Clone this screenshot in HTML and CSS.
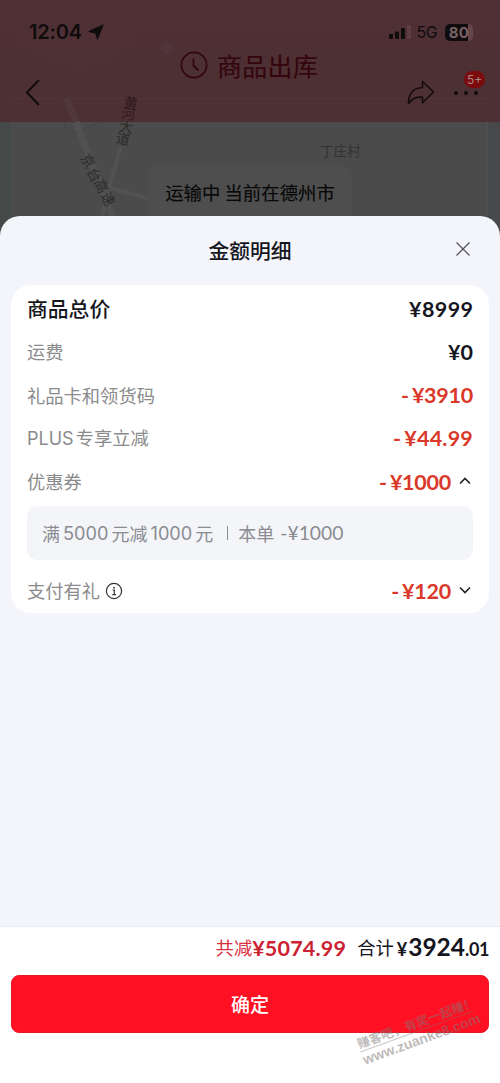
FILE: index.html
```html
<!DOCTYPE html>
<html lang="zh-CN">
<head>
<meta charset="utf-8">
<meta name="viewport" content="width=device-width, initial-scale=1">
<title>金额明细</title>
<link rel="stylesheet" href="styles.css">
</head>
<body>
<div class="screen">
  <header class="header">
    <svg class="clouds" width="500" height="122" viewBox="0 0 500 122">
      <path d="M12 48Q28 24 58 27Q85 8 105 25Q122 21 138 45Q120 48 112 60Q82 76 45 58Q33 46 12 48Z" fill="#563b3d" opacity=".15"/>
      <path d="M157 48Q165 47 167 40Q169 47 178 48Q169 50 167 55Q165 50 157 48Z" fill="#573b49" opacity=".4"/>
      <path d="M10 98.500H490" fill="none" stroke="#583c40" opacity=".35"/>
    </svg>
    <div class="status">
      <span class="time">12:04</span>
      <svg class="locate" width="16" height="16" viewBox="0 0 16 16"><path d="M15.200 .8 9.400 15.400 7.800 9.300 .8 7.500Z" fill="#100b0c" stroke="#100b0c" stroke-linejoin="round"/></svg>
      <svg class="signal" width="23" height="16" viewBox="0 0 23 16">
        <g fill="#100b0c"><rect x="0" y="10" width="4" height="5" rx="1"/><rect x="6" y="7.500" width="4" height="7.500" rx="1"/><rect x="12" y="4" width="4" height="11" rx="1"/></g>
        <rect x="18" y="1" width="4" height="14" rx="1" fill="#5d3f42"/>
      </svg>
      <span class="network">5G</span>
      <span class="battery"><b>80</b></span>
    </div>
    <div class="nav">
      <svg class="back" width="16" height="28" viewBox="0 0 16 28"><path d="M14 2 2 14.500 14 27" fill="none" stroke="#100b0c" stroke-width="2"/></svg>
      <div class="order-state">
        <svg width="28" height="28" viewBox="0 0 28 28" fill="none" stroke="#34060e" stroke-width="1.8"><circle cx="14" cy="14" r="12.600"/><path d="M13.500 8V14.500L18 19" stroke-linecap="round" stroke-linejoin="round"/></svg>
        <span>商品出库</span>
      </div>
      <svg class="share" width="28" height="26" viewBox="0 0 28 26"><path d="M15.500 1.500 26.500 12 15.500 22.800V17.300Q6.500 16 1.500 23.500Q1.500 8.500 15.500 7.500Z" fill="none" stroke="#150b0c" stroke-width="1.6" stroke-linejoin="round"/></svg>
      <div class="more"><i></i><i></i><i></i><span class="badge">5+</span></div>
    </div>
  </header>
  <section class="map">
    <svg class="map-canvas" width="500" height="152" viewBox="0 88 500 152">
      <path d="M0 122H11V240H0Z" fill="#454948"/>
      <path d="M487 122H500V240H487Z" fill="#46484b"/>
      <path d="M11.500 122V240M487.500 122V240" stroke="#4f5050"/>
      <path d="M66 98Q71 109 76 122" fill="none" stroke="#50373a" stroke-width="7"/>
      <path d="M76 122Q83 142 94 169T121 240" fill="none" stroke="#505150" stroke-width="7"/>
      <path d="M121 146 109 188 101 222M110 188 150 199" fill="none" stroke="#515252" stroke-width="4"/>
      <path d="M64 122Q64 136 77 132M84 129 101 122" fill="none" stroke="#454545"/>
      <g class="road-name" fill="#2b2b2b" text-anchor="middle">
        <text x="131" y="108" transform="rotate(8 131 103)" fill="#32191d">黄</text>
        <text x="128.500" y="119" transform="rotate(8 128 114)" fill="#32191d">河</text>
        <text x="126" y="132" transform="rotate(10 126 128)">大</text>
        <text x="123" y="144" transform="rotate(12 123 140)">道</text>
        <text x="88" y="166" transform="rotate(58 88 161)">京</text>
        <text x="94" y="180" transform="rotate(62 94 175)">台</text>
        <text x="101" y="191" transform="rotate(64 101 186)">高</text>
        <text x="108" y="204" transform="rotate(64 108 199)">速</text>
      </g>
      <text class="village" x="320" y="156">丁庄村</text>
    </svg>
    <div class="location">运输中 当前在德州市</div>
  </section>
  <main class="sheet">
    <div class="sheet-title">
      <h1>金额明细</h1>
      <svg class="close" width="16" height="16" viewBox="0 0 16 16"><path d="m1.500 1.500 13 13m0-13-13 13" stroke="#55565d" stroke-width="1.3"/></svg>
    </div>
    <div class="card">
      <div class="row total"><span class="label">商品总价</span><span class="amount">¥8999</span></div>
      <div class="row"><span class="label">运费</span><span class="amount">¥0</span></div>
      <div class="row off"><span class="label">礼品卡和领货码</span><span class="amount"><span class="minus">-</span>¥3910</span></div>
      <div class="row off"><span class="label"><span class="latin">PLUS</span>专享立减</span><span class="amount wide"><span class="minus">-</span>¥44.99</span></div>
      <div class="row off"><span class="label">优惠券</span><span class="amount"><span class="minus">-</span>¥1000</span><svg class="chevron" width="12" height="8" viewBox="0 0 12 8"><path d="m1 6.500 5-5 5 5" fill="none" stroke="#222" stroke-width="1.6"/></svg></div>
      <div class="coupon"><span>满</span><span class="digits">5000</span><span>元减</span><span class="digits">1000</span><span>元</span><i class="bar"></i><span>本单</span><span class="coupon-off">-¥1000</span></div>
      <div class="row off"><span class="label">支付有礼</span><svg class="info" width="18" height="18" viewBox="0 0 18 18"><circle cx="9" cy="9" r="7.600" fill="none" stroke="#333" stroke-width="1.2"/><circle cx="9" cy="5.700" r=".9" fill="#333"/><path d="M7.500 8H9.300V12.500M7.300 12.600H11" fill="none" stroke="#333" stroke-width="1.2"/></svg><span class="amount"><span class="minus">-</span>¥120</span><svg class="chevron" width="12" height="8" viewBox="0 0 12 8"><path d="m1 1.500 5 5 5-5" fill="none" stroke="#222" stroke-width="1.6"/></svg></div>
    </div>
  </main>
  <footer class="footer">
    <div class="summary">
      <span class="saved">共减</span><b class="saved-amount">¥5074.99</b>
      <span class="sum-label">合计</span><b class="sum"><span class="yen">¥</span><span class="whole">3924</span><span class="cents">.01</span></b>
    </div>
    <button class="confirm">确定</button>
    <div class="watermark"><span class="slogan">赚客吧，有奖一起赚！</span><span class="site">www.zuanke8.com</span></div>
  </footer>
</div>
</body>
</html>
```
FILE: styles.css
```css
* { box-sizing: border-box; }
body {
  margin: 0;
  font-family: "Liberation Sans", "Noto Sans CJK SC", sans-serif;
  color: #15151e;
}
.screen { width: 500px; height: 1083px; display: flex; flex-direction: column; overflow: hidden; background: #fff; }
svg { display: block; flex: none; }

.header { position: relative; height: 122px; flex: none; background: linear-gradient(#4f3034, #4c3034); color: #100b0c; }
.clouds { position: absolute; inset: 0; }
.status { position: relative; height: 64px; padding: 0 20px 0 29px; display: flex; align-items: center; }
.time { font: 600 20px/24px Inter, sans-serif; letter-spacing: -.2px; }
.locate { margin-left: 6px; }
.signal { margin-left: auto; }
.network { margin-left: 5px; font: 400 16px/20px Inter, sans-serif; letter-spacing: -.6px; }
.battery { width: 28px; height: 17px; margin: 0 7px 0 8px; border-radius: 5px; background: linear-gradient(90deg, #100b0c 82%, #65474a 82%); display: grid; place-items: center; }
.battery b { font: 700 15px/17px Inter, sans-serif; color: #786267; letter-spacing: .2px; }
.nav { position: relative; height: 58px; padding: 0 22px 0 25px; display: flex; align-items: flex-start; }
.back { margin-top: 14px; }
.order-state { display: flex; align-items: center; gap: 9px; margin: -15px 0 0 139px; color: #34060e; font: 400 25px/32px "Noto Sans CJK SC", sans-serif; letter-spacing: .3px; -webkit-text-stroke: .2px #34060e; }
.share { margin: 16px 0 0 auto; }
.more { position: relative; width: 24px; margin: 26.500px 0 0 19px; display: flex; justify-content: space-between; }
.more i { width: 4px; height: 4px; border-radius: 50%; background: #100b0c; }
.badge { position: absolute; left: 10px; top: -20px; width: 21px; height: 17px; border-radius: 9px; background: #7d0a0c; color: #aa8585; font: 12px/17px Inter, sans-serif; text-align: center; }

.map { position: relative; height: 118px; flex: none; background: #4b4b4b; padding: 43px 0 0 148px; }
.map-canvas { position: absolute; left: 0; top: -34px; }
.road-name { font: 14px "Noto Sans CJK SC", sans-serif; }
.village { font: 13.500px "Noto Sans CJK SC", sans-serif; fill: #323232; }
.location { position: relative; width: 204px; height: 70px; padding-top: 13px; border-radius: 12px; background: #4e4e4e; color: #080808; text-align: center; font: 400 18.400px/28px "Noto Sans CJK SC", sans-serif; -webkit-text-stroke: .15px #080808; white-space: nowrap; }

.sheet { position: relative; flex: none; height: 710px; margin-top: -24px; padding: 0 11px; border-radius: 20px 20px 0 0; background: #f4f5fa; }
.sheet-title { height: 69px; display: grid; grid-template-columns: 1fr auto 1fr; align-items: center; }
.sheet-title h1 { grid-column: 2; margin: -2px 0 0; font: 500 20.800px/30px "Noto Sans CJK SC", sans-serif; }
.close { justify-self: end; margin: -4px 18.500px 0 0; }
.card { height: 328px; padding: 2.500px 16px 0; border-radius: 20px; background: #fff; }
.row { height: 43.250px; display: flex; align-items: center; }
.label { margin-top: -2px; font: 400 18.300px/28px "Noto Sans CJK SC", sans-serif; color: #8b8b8c; }
.latin { font-family: Inter, sans-serif; margin-right: 2px; font-size: 18px; }
.total .label { font-size: 20.800px; font-weight: 500; color: #17181d; }
.amount { margin: -1px 0 0 auto; font: 700 21.500px/28px Lato, sans-serif; color: #15151e; }
.total .amount { letter-spacing: .4px; margin-right: -.4px; }
.off .amount { color: #da3829; letter-spacing: -.25px; }
.off .wide { letter-spacing: .2px; }
.minus { margin-right: 3px; }
.chevron { margin: -3px 2px 0 8px; }
.info { margin: -1px 0 0 5px; }
.coupon { height: 54px; margin: 2.500px 0 9.500px; padding: 0 15px; display: flex; align-items: center; border-radius: 10px; background: #f4f5f9; color: #8b8c91; font: 18px/28px "Noto Sans CJK SC", sans-serif; }
.digits { font: 18.200px/28px Inter, sans-serif; margin: 0 3px; }
.bar { width: 1px; height: 14px; margin: 0 10px 0 14px; background: #8b8c91; }
.coupon-off { margin-left: 6px; font: 19.300px/28px Lato, sans-serif; }

.footer { position: relative; flex: 1; padding: 0 11px; border-top: 1px solid #ebedf2; background: #fff; }
.summary { height: 48px; display: flex; align-items: center; justify-content: flex-end; padding-bottom: 6px; }
.saved, .sum-label { margin-top: -2px; font: 18.300px/28px "Noto Sans CJK SC", sans-serif; }
.saved { color: #d7303f; }
.saved-amount { font: 700 21.500px/28px Lato, sans-serif; color: #cb2131; letter-spacing: .2px; }
.sum-label { margin-left: 11px; }
.sum { display: flex; align-items: baseline; margin-left: 3px; font-family: Lato, sans-serif; line-height: 30px; }
.yen { font-size: 18px; margin-right: 1px; }
.whole { font-size: 24.500px; }
.cents { font-size: 18px; letter-spacing: -.4px; }
.confirm { display: block; width: 478px; height: 58px; padding: 0; border: 1px solid #e51827; border-radius: 8px; background: #ff1022; color: #fff; font: 500 19px/56px "Noto Sans CJK SC", sans-serif; }
.watermark { position: absolute; left: 357px; top: 88px; width: 120px; transform: rotate(-20deg); display: flex; flex-direction: column; color: rgba(125, 118, 118, .5); font: 700 12.500px/16px "Noto Sans CJK SC", sans-serif; white-space: nowrap; }
.site { border-top: 1px solid rgba(125, 112, 112, .4); font: 700 14px/17px "Liberation Sans", sans-serif; }
```
